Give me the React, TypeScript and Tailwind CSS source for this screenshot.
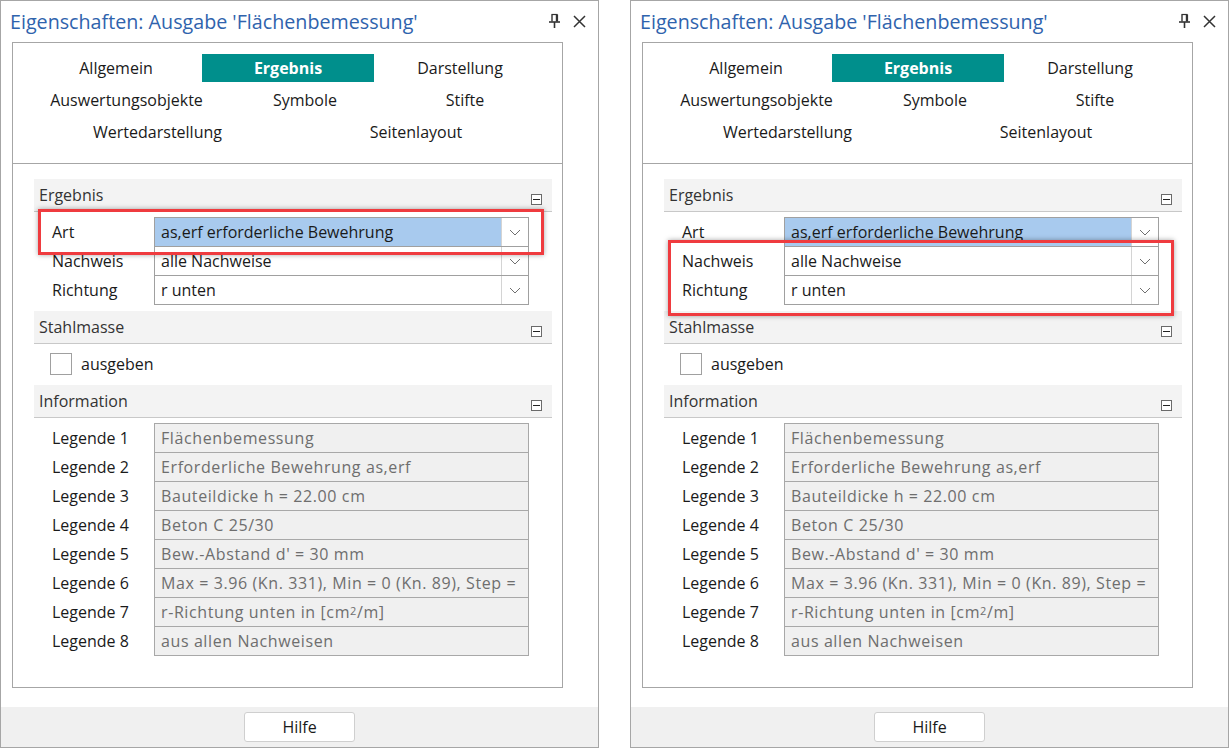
import React from "react";

const FONT = { fontFamily: '"Open Sans", "Noto Sans", Arial, sans-serif' };

const legends: React.ReactNode[] = [
  "Flächenbemessung",
  "Erforderliche Bewehrung as,erf",
  "Bauteildicke h = 22.00 cm",
  "Beton C 25/30",
  "Bew.-Abstand d' = 30 mm",
  "Max = 3.96 (Kn. 331), Min = 0 (Kn. 89), Step =",
  <>
    r-Richtung unten in [cm<sup className="relative -top-[1px] text-[11px]">2</sup>/m]
  </>,
  "aus allen Nachweisen",
];

function PinIcon() {
  return (
    <svg width="13" height="17" viewBox="0 0 13 17" className="text-[#333]">
      <path d="M3.5 1.5h6" stroke="currentColor" strokeWidth="1.2" fill="none" />
      <path d="M4 1.5v7M8.5 1.5v7" stroke="currentColor" strokeWidth="1.4" fill="none" />
      <path d="M9.5 1.5v7" stroke="currentColor" strokeWidth="1.2" fill="none" />
      <path d="M1 9h11" stroke="currentColor" strokeWidth="1.6" fill="none" />
      <path d="M6.5 9v6" stroke="currentColor" strokeWidth="1.6" fill="none" />
    </svg>
  );
}

function CloseIcon() {
  return (
    <svg width="13" height="13" viewBox="0 0 13 13" className="text-[#333]">
      <path d="M1 1l11 11M12 1L1 12" stroke="currentColor" strokeWidth="1.5" fill="none" />
    </svg>
  );
}

function Chevron() {
  return (
    <svg width="12" height="7" viewBox="0 0 12 7">
      <path d="M1 1l5 5 5-5" stroke="#707070" strokeWidth="1" fill="none" />
    </svg>
  );
}

function Collapse() {
  return (
    <span className="mb-[6px] flex h-[11px] w-[11px] items-center justify-center self-end border border-[#6a6a6a] bg-white">
      <span className="h-[1.5px] w-[7px] bg-[#222]" />
    </span>
  );
}

function SectionHeader({ title }: { title: string }) {
  return (
    <div className="flex h-[33px] items-center justify-between border-b border-[#c8c8c8] bg-[#f3f3f3] pl-[5px] pr-[10px]">
      <span className="text-[16px] text-[#333]">{title}</span>
      <Collapse />
    </div>
  );
}

function Tab({ label, w, active }: { label: string; w: number; active?: boolean }) {
  return (
    <div
      style={{ width: w }}
      className={
        active
          ? "flex h-[28px] items-center justify-center bg-[#008f8c] text-[16px] font-bold text-white"
          : "flex h-[28px] items-center justify-center text-[16px] text-[#1a1a1a]"
      }
    >
      {label}
    </div>
  );
}

function ComboRow({ label, value, last, selected }: { label: string; value: string; last?: boolean; selected?: boolean }) {
  return (
    <div className="flex">
      <div className="flex w-[120px] items-center pl-[18px] text-[16px] text-[#1a1a1a]">{label}</div>
      <div
        className={
          "flex w-[375px] border-x border-t border-[#a0a0a0] bg-white" + (last ? " h-[30px] border-b" : " h-[29px]")
        }
      >
        <div className={"flex flex-1 items-center pl-[6px] text-[16px] text-[#1a1a1a]" + (selected ? " bg-[#a8caee]" : "")}>
          {value}
        </div>
        <div className="flex w-[27px] items-center justify-center border-l border-[#d4d4d4]">
          <Chevron />
        </div>
      </div>
    </div>
  );
}

function LegendRow({ n, value, last }: { n: number; value: React.ReactNode; last?: boolean }) {
  return (
    <div className="flex">
      <div className="flex w-[120px] items-center pl-[18px] text-[16px] text-[#1a1a1a]">Legende {n}</div>
      <div
        className={
          "flex w-[375px] items-center overflow-hidden whitespace-nowrap border-x border-t border-[#a8a8a8] bg-[#f0f0f0] pl-[6px] text-[16px] tracking-[0.6px] text-[#6e6e6e]" +
          (last ? " h-[30px] border-b" : " h-[29px]")
        }
      >
        {value}
      </div>
    </div>
  );
}

function Window({ highlight }: { highlight: "art" | "two" }) {
  return (
    <div className="relative flex h-[748px] w-[599px] flex-col border border-[#a6a6a6] bg-white">
      {/* Titelleiste */}
      <div className="flex h-[41px] items-center pl-[9px] pr-[12px]">
        <span className="flex-1 text-[19.7px] text-[#2f63ad]">Eigenschaften: Ausgabe 'Flächenbemessung'</span>
        <div className="flex items-center gap-[12px]">
          <PinIcon />
          <CloseIcon />
        </div>
      </div>

      <div className="ml-[11px] flex h-[646px] w-[551px] flex-col border border-[#a6a6a6]">
        {/* Reiter */}
        <div className="flex flex-col gap-[4px] pb-[17px] pl-[17px] pt-[11px]">
          <div className="flex">
            <Tab label="Allgemein" w={172} />
            <Tab label="Ergebnis" w={172} active />
            <Tab label="Darstellung" w={172} />
          </div>
          <div className="flex">
            <Tab label="Auswertungsobjekte" w={193} />
            <Tab label="Symbole" w={164} />
            <Tab label="Stifte" w={156} />
          </div>
          <div className="flex">
            <Tab label="Wertedarstellung" w={255} />
            <Tab label="Seitenlayout" w={262} />
          </div>
        </div>
        <div className="border-t border-[#a6a6a6]" />

        <div className="ml-[21px] mt-[15px] flex w-[518px] flex-col">
          <SectionHeader title="Ergebnis" />
          <div className="mt-[5px] flex flex-col">
            <ComboRow label="Art" value="as,erf erforderliche Bewehrung" selected />
            <ComboRow label="Nachweis" value="alle Nachweise" />
            <ComboRow label="Richtung" value="r unten" last />
          </div>

          <div className="mt-[6px]">
            <SectionHeader title="Stahlmasse" />
          </div>
          <div className="mt-[9px] flex h-[22px] items-center gap-[9px] pl-[16px]">
            <span className="h-[22px] w-[22px] border border-[#a0a0a0] bg-white" />
            <span className="text-[16px] leading-[22px] text-[#1a1a1a]">ausgeben</span>
          </div>

          <div className="mt-[10px]">
            <SectionHeader title="Information" />
          </div>
          <div className="mt-[5px] flex flex-col">
            {legends.map((v, i) => (
              <LegendRow key={i} n={i + 1} value={v} last={i === legends.length - 1} />
            ))}
          </div>
        </div>
      </div>

      {/* Fußleiste */}
      <div className="mt-[19px] flex flex-1 items-center justify-center bg-[#f0f0f0]">
        <button className="h-[30px] w-[111px] rounded-[3px] border border-[#cfcfcf] bg-white text-[16px] text-[#1a1a1a]">
          Hilfe
        </button>
      </div>

      {/* Markierung */}
      {highlight === "art" ? (
        <div className="pointer-events-none absolute left-[37px] top-[208px] h-[46px] w-[506px] border-[3px] border-[#ef3b3f] shadow-[0_0_5px_rgba(0,0,0,0.35)]" />
      ) : (
        <div className="pointer-events-none absolute left-[37px] top-[239px] h-[76px] w-[506px] border-[3px] border-[#ef3b3f] shadow-[0_0_5px_rgba(0,0,0,0.35)]" />
      )}
    </div>
  );
}

export default function App() {
  return (
    <div style={FONT} className="flex h-[748px] w-[1229px] gap-[31px] overflow-hidden bg-white">
      <Window highlight="art" />
      <Window highlight="two" />
    </div>
  );
}
